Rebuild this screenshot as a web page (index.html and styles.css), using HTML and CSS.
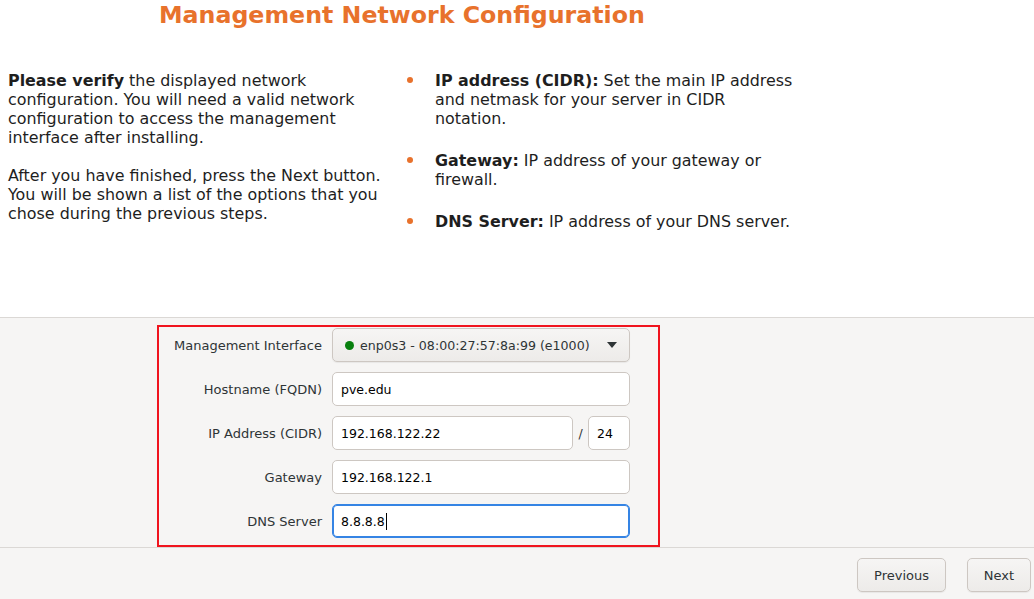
FILE: index.html
```html
<!DOCTYPE html>
<html>
<head>
<meta charset="utf-8">
<link rel="stylesheet" href="styles.css">
</head>
<body>
<div class="top">
  <h1 class="title">Management Network Configuration</h1>
  <div class="intro">
    <div class="left">
      <p><b>Please verify</b> the displayed network configuration. You will need a valid network configuration to access the management interface after installing.</p>
      <p>After you have finished, press the Next button. You will be shown a list of the options that you chose during the previous steps.</p>
    </div>
    <ul class="right">
      <li><b>IP address (CIDR):</b> Set the main IP address and netmask for your server in CIDR notation.</li>
      <li><b>Gateway:</b> IP address of your gateway or firewall.</li>
      <li><b>DNS Server:</b> IP address of your DNS server.</li>
    </ul>
  </div>
</div>
<div class="formarea">
  <div class="form">
    <div class="label">Management Interface</div>
    <div class="combo">
      <span class="dot"></span>
      <span class="combo-text">enp0s3 - 08:00:27:57:8a:99 (e1000)</span>
      <svg class="arrow" width="10" height="6" viewBox="0 0 10 6"><path d="M0 0 L10 0 L5 6 Z" fill="#2e3436"/></svg>
    </div>
    <div class="label">Hostname (FQDN)</div>
    <div class="input">pve.edu</div>
    <div class="label">IP Address (CIDR)</div>
    <div class="iprow">
      <div class="input grow">192.168.122.22</div>
      <span class="slash">/</span>
      <div class="input mask">24</div>
    </div>
    <div class="label">Gateway</div>
    <div class="input">192.168.122.1</div>
    <div class="label">DNS Server</div>
    <div class="input focus">8.8.8.8<span class="caret"></span></div>
  </div>
</div>
<div class="bottom">
  <button class="btn prev">Previous</button>
  <button class="btn next">Next</button>
</div>
</body>
</html>
```

FILE: styles.css
```css
html, body {
  margin: 0;
  padding: 0;
}
body {
  width: 1034px;
  height: 599px;
  overflow: hidden;
  font-family: "DejaVu Sans", sans-serif;
  color: #1e1e1e;
  background: #f6f5f4;
}
.top {
  height: 317px;
  background: #ffffff;
  border-bottom: 1px solid #dbd8d5;
}
.title {
  margin: 0;
  padding-left: 159px;
  font-size: 23.7px;
  line-height: 30px;
  font-weight: bold;
  color: #e8722c;
}
.intro {
  display: flex;
  margin-top: 41px;
  padding-left: 8px;
  font-size: 15.9px;
  line-height: 19px;
}
.left {
  width: 384px;
}
.left p {
  margin: 0 0 19px 0;
}
.right {
  margin: 0;
  padding: 0 0 0 43px;
  width: 360px;
  list-style: none;
}
.right li {
  position: relative;
  margin-bottom: 23px;
}
.right li::before {
  content: "";
  position: absolute;
  left: -28px;
  top: 6px;
  width: 6px;
  height: 6px;
  border-radius: 50%;
  background: #e8722c;
}
.formarea {
  height: 230px;
  border-bottom: 1px solid #dbd8d5;
  padding-top: 7px;
  box-sizing: border-box;
}
.form {
  margin-left: 157px;
  width: 503px;
  box-sizing: border-box;
  border: 2px solid #f0141e;
  padding: 1px 28px 7px 0;
  display: grid;
  grid-template-columns: 163px 298px;
  column-gap: 10px;
  row-gap: 10px;
  grid-auto-rows: 34px;
  font-size: 12.5px;
}
.label {
  text-align: right;
  align-self: center;
  color: #2e3436;
  font-size: 13px;
}
.input {
  box-sizing: border-box;
  height: 34px;
  border: 1px solid #cdc7c2;
  border-radius: 5px;
  background: #ffffff;
  padding: 0 8px;
  display: flex;
  align-items: center;
  color: #000;
}
.input.focus {
  border-color: #3584e4;
  box-shadow: inset 0 0 0 1px #3584e4;
}
.caret {
  display: inline-block;
  width: 1px;
  height: 17px;
  background: #000;
  margin-left: 1px;
}
.iprow {
  display: flex;
  align-items: center;
}
.grow {
  width: 241px;
}
.slash {
  width: 15px;
  text-align: center;
  color: #2e3436;
}
.mask {
  width: 42px;
}
.combo {
  box-sizing: border-box;
  height: 34px;
  border: 1px solid #cdc7c2;
  border-radius: 5px;
  background: linear-gradient(#f6f5f4, #edebe9);
  box-shadow: 0 1px 1px rgba(0,0,0,0.06);
  display: flex;
  align-items: center;
  padding: 0 12px 0 12px;
  color: #2e3436;
  font-size: 12.6px;
}
.dot {
  width: 9px;
  height: 9px;
  border-radius: 50%;
  background: #08800f;
  margin-right: 6px;
}
.combo-text {
  flex: 1;
}
.arrow {
  display: block;
}
.bottom {
  display: flex;
  justify-content: flex-end;
  gap: 21px;
  padding: 10px 3px 0 0;
}
.btn {
  height: 34px;
  box-sizing: border-box;
  border: 1px solid #cdc7c2;
  border-radius: 5px;
  background: linear-gradient(#f6f5f4, #edebe9);
  box-shadow: 0 1px 1px rgba(0,0,0,0.06);
  font-family: "DejaVu Sans", sans-serif;
  font-size: 13px;
  color: #2e3436;
  padding: 0;
}
.prev {
  width: 89px;
}
.next {
  width: 64px;
}
```
